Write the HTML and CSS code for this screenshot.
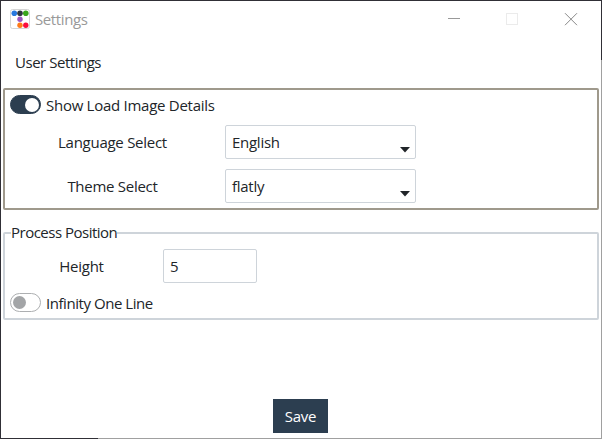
FILE: index.html
```html
<!DOCTYPE html>
<html lang="en">
<head>
<meta charset="utf-8">
<title>Settings</title>
<link rel="stylesheet" href="styles.css">
</head>
<body>
<main class="window">
  <header class="titlebar">
    <svg class="app-icon" width="20" height="20" viewBox="0 0 20 20">
      <rect x=".5" y=".5" width="19" height="19" rx="2" fill="#fff" stroke="#d5d5d5"/>
      <circle cx="4.3" cy="4.2" r="2.8" fill="#2878de"/>
      <circle cx="10" cy="4.2" r="2.8" fill="#303640"/>
      <circle cx="15.8" cy="4.2" r="2.8" fill="#3aa51c"/>
      <circle cx="10" cy="10.3" r="2.7" fill="#9b55c0"/>
      <circle cx="10" cy="16.3" r="2.7" fill="#ff7a18"/>
      <circle cx="15.8" cy="16.3" r="2.7" fill="#fb0d3c"/>
    </svg>
    <span class="title">Settings</span>
    <svg class="controls" width="130" height="13" viewBox="0 0 130 13" fill="none">
      <path d="M0 5.5h12" stroke="#999"/>
      <rect x="58.5" y=".5" width="11" height="11" stroke="#ebebeb"/>
      <path d="M117 .2l12 12M129 .2l-12 12" stroke="#888"/>
    </svg>
  </header>
  <h1 class="heading">User Settings</h1>
  <section class="panel general">
    <label class="toggle-row"><span class="toggle on"></span><span class="text">Show Load Image Details</span></label>
    <div class="field"><span class="label text">Language Select</span>
      <div class="box select"><span class="text">English</span><svg class="arrow" width="10" height="6" viewBox="0 0 10 6"><path d="M0 0h10L5 5.5z" fill="#212529"/></svg></div></div>
    <div class="field"><span class="label text">Theme Select</span>
      <div class="box select"><span class="text">flatly</span><svg class="arrow" width="10" height="6" viewBox="0 0 10 6"><path d="M0 0h10L5 5.5z" fill="#212529"/></svg></div></div>
  </section>
  <fieldset class="panel process">
    <legend>Process Position</legend>
    <div class="height-row"><span class="height-label text">Height</span><div class="box number"><span class="text">5</span></div></div>
    <label class="toggle-row"><span class="toggle"></span><span class="text tight">Infinity One Line</span></label>
  </fieldset>
  <footer><button class="save">Save</button></footer>
</main>
</body>
</html>
```
FILE: styles.css
```css
* { box-sizing: border-box; }
body {
  margin: 0;
  font: 15px/20px "Open Sans", "Noto Sans", sans-serif;
  letter-spacing: -.27px;
  color: #212529;
  white-space: nowrap;
}
.window {
  width: 602px;
  height: 439px;
  padding: 1px 3px;
  background:
    linear-gradient(#302f36, #302f36) left top / 602px 1px no-repeat,
    linear-gradient(#302f36, #302f36) left top / 1px 439px no-repeat,
    linear-gradient(#302f36 60px, #a0a0a0 60px) right top / 1px 439px no-repeat,
    linear-gradient(90deg, #302f36 98px, #a0a0a0 98px) left bottom / 602px 1px no-repeat,
    #fff;
  display: flex;
  flex-direction: column;
}
.titlebar { height: 36px; padding: 0 21px 0 7px; display: flex; align-items: center; color: #999; }
.title { margin: 0 0 0 5px; letter-spacing: -.4px; }
.controls { margin-left: auto; }
.heading { margin: 15px 0 0 12px; height: 36px; font: inherit; letter-spacing: -.47px; }
.panel { width: 596px; margin: 0; border: 2px solid #9f998c; border-radius: 2px; flex: none; }
.general { height: 122px; padding: 5px; }
.toggle-row { display: flex; align-items: flex-start; height: 20px; }
.text { padding-bottom: 1px; }
.tight { letter-spacing: -.45px; }
.toggle { width: 31px; height: 19px; border: 1px solid #adafb1; border-radius: 10px; margin-right: 5px; padding: 2px; flex: none; }
.toggle::after { content: ""; display: block; width: 13px; height: 13px; border-radius: 50%; background: #a3a5a7; }
.toggle.on { background: #2c3e50; border-color: #2c3e50; padding-top: 1.5px; }
.toggle.on::after { background: #fff; margin-left: 12px; width: 14px; height: 14px; }
.field { display: flex; align-items: center; height: 34px; margin-top: 10px; }
.label { width: 205px; text-align: center; margin-right: 10px; }
.box { height: 34px; border: 1px solid #ced4da; border-radius: 2px; padding: 0 6px; display: flex; align-items: center; }
.select { width: 191px; justify-content: space-between; padding-right: 5px; }
.arrow { margin-top: 16px; }
.process { height: 98px; margin-top: 12px; padding: 0 5px; border-color: #ced4da; }
legend { padding: 0; margin-left: 1px; height: 21px; line-height: 20px; letter-spacing: -.5px; }
.height-row { display: flex; align-items: center; height: 34px; margin-top: 6px; }
.height-label { width: 143px; text-align: center; margin-right: 10px; }
.number { width: 94px; }
.process .toggle-row { margin-top: 10px; }
footer { margin-top: 79px; padding-right: 1px; display: flex; justify-content: center; }
.save { width: 55px; height: 34px; border: 0; padding: 0 0 1px; background: #2c3e50; color: #fff; font: inherit; letter-spacing: -.3px; }
.general .toggle-row .text, .process .toggle-row .text { padding: 0; }
```
